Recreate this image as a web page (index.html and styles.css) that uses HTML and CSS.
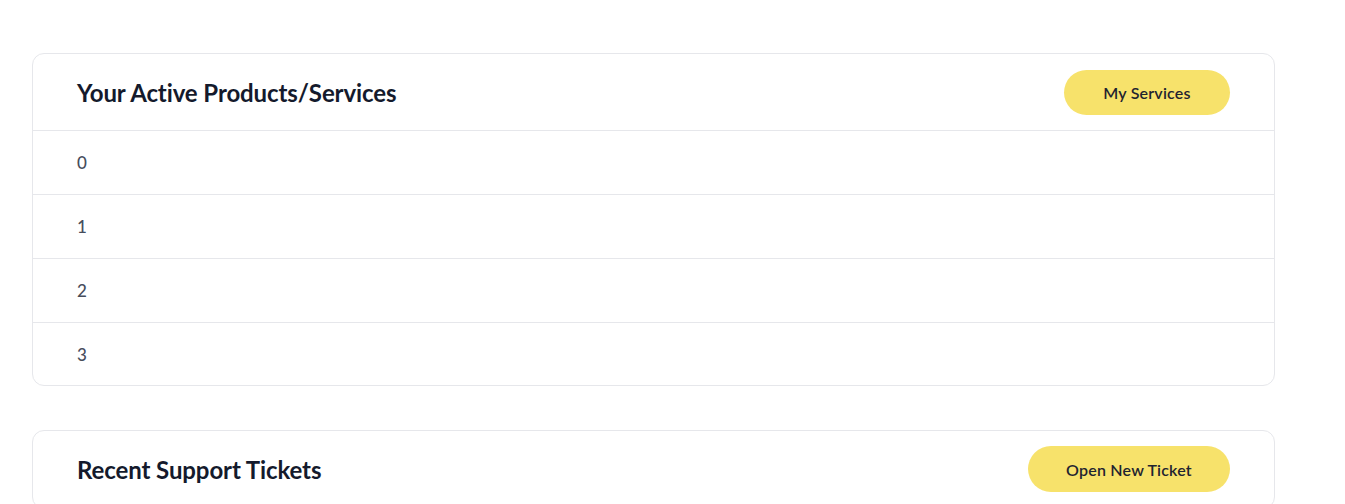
FILE: index.html
```html
<!DOCTYPE html>
<html>
<head>
<meta charset="utf-8">
<link rel="stylesheet" href="styles.css">
</head>
<body>
<div class="page">
  <section class="card">
    <div class="card-head">
      <h2 class="card-title">Your Active Products/Services</h2>
      <a class="btn btn-services">My Services</a>
    </div>
    <div class="row">0</div>
    <div class="row">1</div>
    <div class="row">2</div>
    <div class="row">3</div>
  </section>
  <section class="card">
    <div class="card-head card-head-tickets">
      <h2 class="card-title">Recent Support Tickets</h2>
      <a class="btn btn-ticket">Open New Ticket</a>
    </div>
  </section>
</div>
</body>
</html>
```
FILE: styles.css
```css
html, body {
  margin: 0;
  padding: 0;
  background: #ffffff;
}
body {
  font-family: Lato, "Noto Sans", sans-serif;
  color: #1a1f2e;
}
.page {
  padding: 53px 0 0 32px;
  width: 1243px;
  display: flex;
  flex-direction: column;
  gap: 44px;
}
.card {
  border: 1px solid #e6e7eb;
  border-radius: 12px;
  background: #fff;
}
.card-head {
  display: flex;
  align-items: center;
  justify-content: space-between;
  padding: 16px 44px 15px 44px;
  border-bottom: 1px solid #e6e7eb;
}
.card-head-tickets {
  padding-top: 15px;
}
.card-title {
  margin: 0;
  font-size: 24px;
  font-weight: 700;
  color: #141a2c;
  letter-spacing: -0.1px;
}
.btn {
  display: inline-flex;
  align-items: center;
  justify-content: center;
  height: 45px;
  border-radius: 23px;
  background: #f7e26b;
  color: #1f2430;
  font-size: 16px;
  font-weight: 600;
  letter-spacing: 0.2px;
  cursor: pointer;
}
.btn-services { width: 166px; }
.btn-ticket { width: 202px; height: 46px; }
.row {
  height: 63px;
  display: flex;
  align-items: center;
  padding-left: 44px;
  font-size: 17px;
  font-weight: 500;
  color: #464d5c;
  border-bottom: 1px solid #e6e7eb;
}
.row:last-child { border-bottom: none; height: 62px; }
```
